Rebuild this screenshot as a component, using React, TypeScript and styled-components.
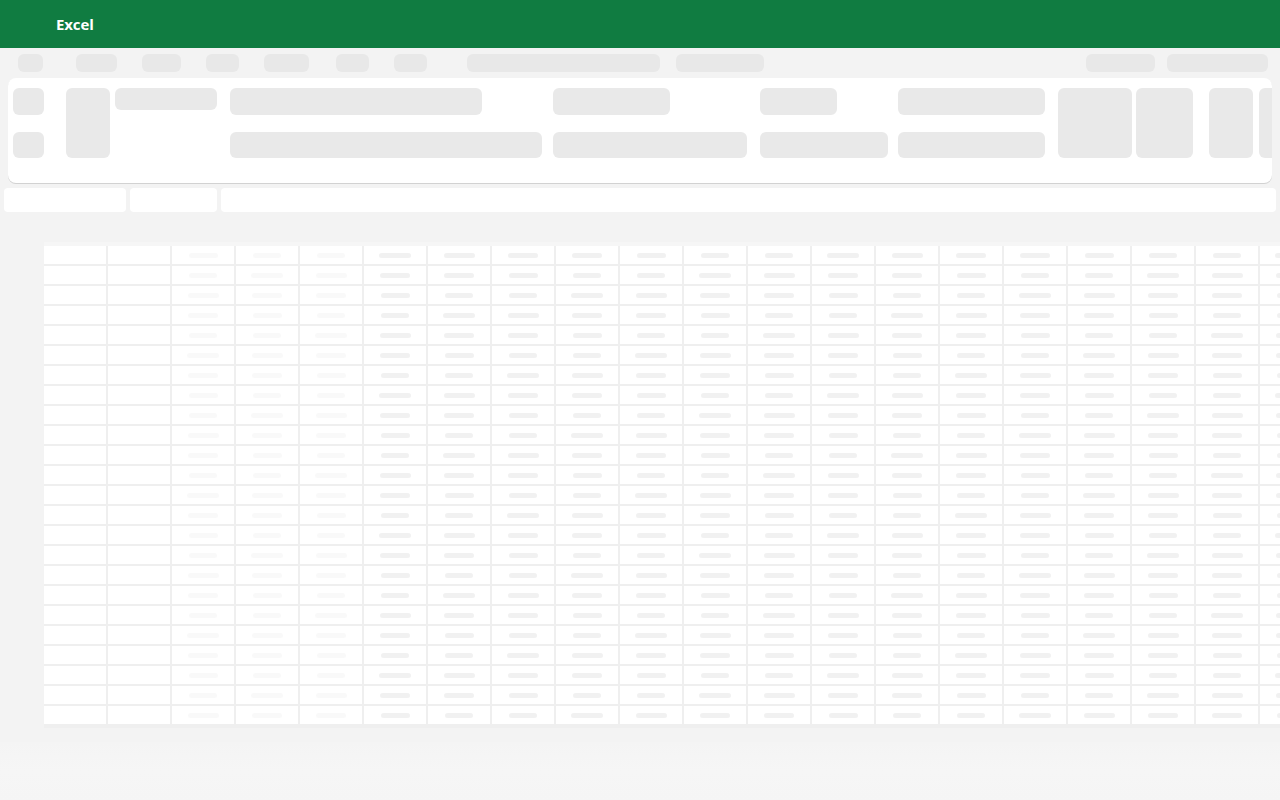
import React from "react";
import styled, { createGlobalStyle } from "styled-components";

const GlobalStyle = createGlobalStyle`
  html, body {
    margin: 0;
    padding: 0;
    background: #f3f3f3;
    overflow: hidden;
    font-family: "Open Sans", "Noto Sans", sans-serif;
  }
  * { box-sizing: border-box; }
`;

const Page = styled.div`
  width: 1280px;
  height: 800px;
  display: flex;
  flex-direction: column;
  background: #f3f3f3;
  overflow: hidden;
`;

const Header = styled.header`
  height: 48px;
  flex-shrink: 0;
  background: #107c41;
  display: flex;
  align-items: center;
  padding-left: 56px;
`;

const AppName = styled.span`
  color: #ffffff;
  font-size: 15px;
  font-weight: 700;
  letter-spacing: -0.1px;
`;

const TabRow = styled.nav`
  margin-top: 6px;
  height: 18px;
  flex-shrink: 0;
  display: flex;
  justify-content: space-between;
  padding: 0 12px 0 0;
`;

const TabGroup = styled.div`
  display: flex;
  align-items: stretch;
`;

const Pill = styled.div<{ $w: number; $ml?: number }>`
  width: ${(p) => p.$w}px;
  margin-left: ${(p) => p.$ml ?? 0}px;
  flex-shrink: 0;
  background: #e8e8e8;
  border-radius: 6px;
`;

const Ribbon = styled.section`
  margin: 6px 8px 0;
  height: 105px;
  flex-shrink: 0;
  background: #ffffff;
  border-radius: 8px;
  box-shadow: 0 1px 0 #d2d2d2;
  padding: 10px 0 0 5px;
  display: flex;
  align-items: flex-start;
  overflow: hidden;
`;

const Stack = styled.div<{ $ml: number }>`
  margin-left: ${(p) => p.$ml}px;
  height: 70px;
  display: flex;
  flex-direction: column;
  justify-content: space-between;
  align-items: flex-start;
  flex-shrink: 0;
`;

const Block = styled.div<{ $w: number; $h: number; $ml?: number }>`
  width: ${(p) => p.$w}px;
  height: ${(p) => p.$h}px;
  margin-left: ${(p) => p.$ml ?? 0}px;
  flex-shrink: 0;
  background: #e9e9e9;
  border-radius: 6px;
`;

const FormulaRow = styled.div`
  margin-top: 5px;
  height: 24px;
  flex-shrink: 0;
  display: flex;
  gap: 4px;
  padding: 0 4px;
`;

const Field = styled.div<{ $w?: number }>`
  ${(p) => (p.$w ? `width: ${p.$w}px; flex-shrink: 0;` : "flex: 1;")}
  background: #ffffff;
  border-radius: 4px;
`;

const SheetArea = styled.div`
  margin-top: 30px;
  padding-left: 44px;
  flex-shrink: 0;
  overflow: hidden;
`;

const Sheet = styled.div`
  display: grid;
  grid-template-columns: repeat(20, 62px);
  grid-auto-rows: 18px;
  gap: 2px;
  padding: 4px 0 4px 0;
  background: linear-gradient(#f6f6f6 0 4px, #efefef 4px);
  width: max-content;
  filter: blur(0.7px);
`;

const Cell = styled.div`
  background: #ffffff;
  display: flex;
  align-items: center;
  justify-content: center;
`;

const CellBar = styled.div<{ $faint: boolean }>`
  height: 5px;
  border-radius: 3px;
  background: #ebebeb;
  opacity: ${(p) => (p.$faint ? 0.28 : 0.72)};
`;

const StatusBar = styled.footer`
  margin-top: auto;
  height: 58px;
  flex-shrink: 0;
  background: linear-gradient(#f4f4f4, #f6f6f6 50%, #f5f5f5);
`;

const leftTabs: Array<[number, number]> = [
  [25, 18],
  [41, 33],
  [39, 25],
  [33, 25],
  [45, 25],
  [33, 27],
  [33, 25],
  [193, 40],
  [88, 16],
];

const ROWS = 24;
const COLS = 20;
const barWidths = [30, 28, 31, 29, 32, 30, 28];

export default function App() {
  const cells: React.ReactNode[] = [];
  for (let r = 0; r < ROWS; r++) {
    for (let c = 0; c < COLS; c++) {
      const w = barWidths[(r * 3 + c * 5) % barWidths.length];
      cells.push(
        <Cell key={`${r}-${c}`}>
          {c >= 2 && <CellBar $faint={c < 5} style={{ width: w }} />}
        </Cell>
      );
    }
  }

  return (
    <Page>
      <GlobalStyle />
      <Header>
        <AppName>Excel</AppName>
      </Header>

      <TabRow>
        <TabGroup>
          {leftTabs.map(([w, ml], i) => (
            <Pill key={i} $w={w} $ml={ml} />
          ))}
        </TabGroup>
        <TabGroup>
          <Pill $w={69} />
          <Pill $w={101} $ml={12} />
        </TabGroup>
      </TabRow>

      <Ribbon>
        <Stack $ml={0}>
          <Block $w={31} $h={27} />
          <Block $w={31} $h={26} />
        </Stack>
        <Block $w={44} $h={70} $ml={22} />
        <Block $w={102} $h={22} $ml={5} />
        <Stack $ml={13}>
          <Block $w={252} $h={27} />
          <Block $w={312} $h={26} />
        </Stack>
        <Stack $ml={11}>
          <Block $w={117} $h={27} />
          <Block $w={194} $h={26} />
        </Stack>
        <Stack $ml={13}>
          <Block $w={77} $h={27} />
          <Block $w={128} $h={26} />
        </Stack>
        <Stack $ml={10}>
          <Block $w={147} $h={27} />
          <Block $w={147} $h={26} />
        </Stack>
        <Block $w={74} $h={70} $ml={13} />
        <Block $w={57} $h={70} $ml={4} />
        <Block $w={44} $h={70} $ml={16} />
        <Block $w={44} $h={70} $ml={6} />
      </Ribbon>

      <FormulaRow>
        <Field $w={122} />
        <Field $w={87} />
        <Field />
      </FormulaRow>

      <SheetArea>
        <Sheet>{cells}</Sheet>
      </SheetArea>

      <StatusBar />
    </Page>
  );
}
